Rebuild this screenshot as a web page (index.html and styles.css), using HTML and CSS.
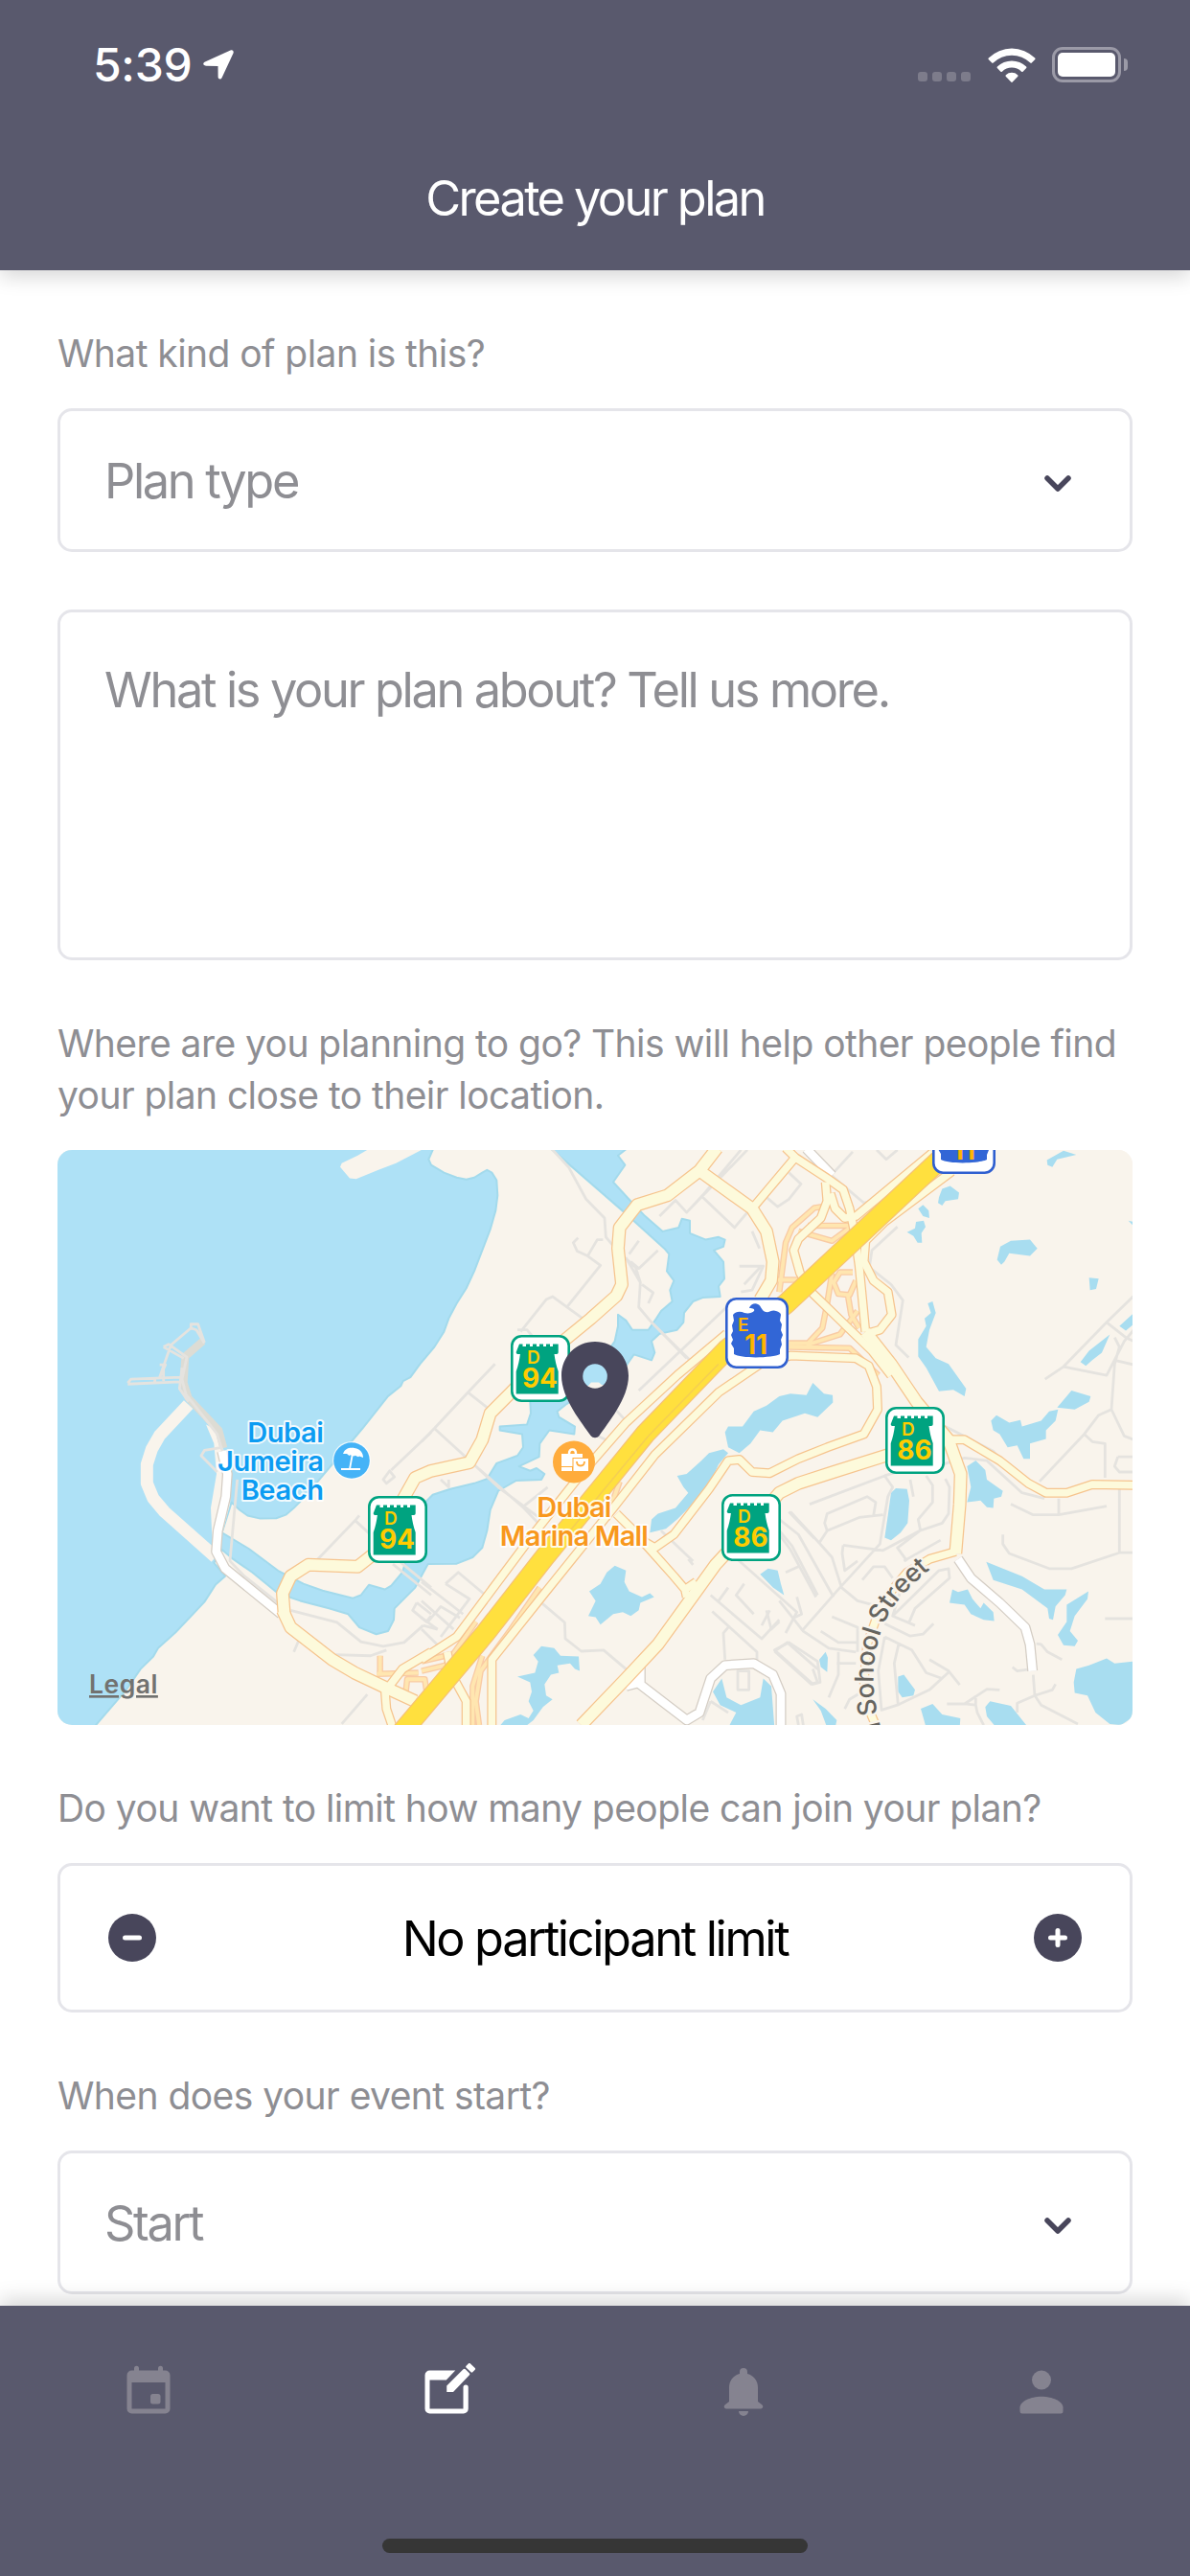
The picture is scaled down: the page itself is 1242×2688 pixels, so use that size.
FILE: index.html
```html
<!DOCTYPE html>
<html lang="en">
<head>
<meta charset="utf-8">
<title>Create your plan</title>
<link rel="stylesheet" href="styles.css">
</head>
<body>
<div class="screen">
  <header class="header">
    <div class="status">
      <div class="status-left">
        <span class="time">5:39</span>
        <svg class="location" viewBox="0 0 32 31"><path d="M2 12.500 28.500.6c2-.9 3.800.7 3 2.800L19.500 29.200c-.9 2-3.800 1.600-3.900-.7L15.500 17 3 16.700c-3.200-.2-3.700-3.100-1-4.200z"/></svg>
      </div>
      <div class="status-right">
        <div class="signal"><i></i><i></i><i></i><i></i></div>
        <svg class="wifi" viewBox="0 0 50 37"><path d="M.8 11.500a34.500 34.500 0 0 1 48.400 0c.5.5.5 1 .1 1.500l-3.500 3.600c-.5.5-1 .5-1.500 0a27.500 27.500 0 0 0-38.600 0c-.5.5-1 .5-1.500 0L.7 13c-.4-.5-.4-1 .1-1.500z"/><path d="M9.900 20.600a21.500 21.500 0 0 1 30.200 0c.5.5.5 1 .1 1.500l-3.600 3.600c-.5.500-1 .5-1.500 0a14.300 14.300 0 0 0-20.200 0c-.5.5-1 .5-1.500 0l-3.600-3.600c-.4-.5-.4-1 .1-1.500z"/><path d="M18.800 29.200a9 9 0 0 1 12.400 0c.5.500.5 1 .1 1.500l-5.500 5.800c-.5.500-1.100.5-1.600 0l-5.500-5.800c-.4-.5-.4-1 .1-1.500z"/></svg>
        <div class="battery"><div class="battery-case"><div class="battery-level"></div></div><div class="battery-nub"></div></div>
      </div>
    </div>
    <h1 class="title">Create your plan</h1>
  </header>

  <main class="form">
    <section class="group">
      <label class="label">What kind of plan is this?</label>
      <div class="field"><span class="placeholder">Plan type</span><svg class="chevron" viewBox="0 0 28 17"><path d="M3 3l11 11L25 3"/></svg></div>
    </section>
    <div class="field field-area"><span class="placeholder">What is your plan about? Tell us more.</span></div>
    <section class="group">
      <label class="label">Where are you planning to go? This will help other people find<br>your plan close to their location.</label>
      <div class="map">
        <svg class="terrain" viewBox="30 25.3 3366 1517.4" preserveAspectRatio="none">
          <defs>
            <g id="main-roads">
              <path d="M740 1250 735 1195 760 1150 815 1120 970 1125 1060 1065 1110 950 1150 890 1200 872 1320 850 1360 790 1385 720 1450 665 1570 560 1700 470 1780 410 1797 380 1785 285 1790 230 1845 170 1940 145 2040 80 2095 20"/>
              <path d="M735 1240 760 1285 890 1370 960 1405 1060 1445 1150 1480"/>
              <path d="M2040 80 2205 180 2250 240 2270 320 2265 370 2230 420"/>
              <path d="M2630 830 2460 875 2350 905 2290 930 2200 1020 2090 1120 2030 1190 1910 1330 1810 1420 1670 1543"/>
              <path d="M2560 505 2640 590 2720 690 2820 790 2858 880 2855 960 2842 1090"/>
            </g>
            <g id="side-roads">
              <path d="M1170 1370 1280 1310 1510 1050 1670 880 1810 745 1970 620 2125 510"/>
              <path d="M1390 1560V1370L1560 1190 1770 970 1900 830 2100 665 2230 590 2325 568 2530 575 2570 595 2595 650 2598 710 2555 775 2440 810 2350 840 2260 878 2205 875 2165 842 2130 845 2070 920 1960 1040 1900 1075 1870 1060 1780 985"/>
              <path d="M1870 1065 1960 1150 1995 1185 2030 1165M1995 1185 2000 1205"/>
              <path d="M1060 1450 1110 1395 1200 1350M1055 1445 1060 1500 1080 1550M1250 1350 1265 1410 1310 1480V1550"/>
              <path d="M2205 180 2340 45 2310 20M2340 45 2440 100 2490 130 2510 180 2525 240 2540 330 2560 505"/>
              <path d="M2435 110 2440 160 2420 205 2350 260 2335 290 2355 350 2390 400 2500 490 2580 555 2640 620"/>
              <path d="M2450 140 2465 180 2495 205 2530 200 2770 32"/>
              <path d="M2830 82 2620 215 2560 265 2555 320 2585 370 2630 400 2642 460 2605 500 2565 510"/>
              <path d="M2820 790 2870 790 2980 845 3070 905 3125 930 3190 930 3270 908 3410 910"/>
              <path d="M2842 1085 2760 1105 2690 1140 2630 1200 2590 1270 2565 1330 2555 1430 2570 1500 2595 1550"/>
            </g>
            <g id="ramps">
              <path d="M2290 400 2310 270 2330 230 2400 178 2425 175M2350 240 2455 265 2520 225M2380 225H2520M2285 368H2350"/>
              <path d="M2320 535H2380L2425 495 2440 430 2455 350M2320 545 2510 548 2600 620M2520 348H2480L2460 375 2475 405 2510 408 2530 370M2505 410 2515 460 2540 495M2375 540 2480 512 2535 450"/>
              <path d="M1160 1405 1030 1408M1040 1360V1405M1170 1400 1245 1385 1340 1270M1350 1543 1340 1480 1355 1400 1450 1290 1540 1180M1330 1543V1440L1360 1360M1170 1375 1245 1360M1120 1460 1125 1422H1180L1185 1450M1750 1000 1790 900"/>
            </g>
            <g id="local-roads">
              <path d="M545 820 562 880 557 940 532 1030 527 1085 555 1130 730 1250"/>
              <path d="M1855 1380V1430L1810 1440M1830 1420 2000 1530 2040 1510 2075 1420 2120 1385 2210 1380 2270 1410 2295 1460V1550"/>
              <path d="M2850 1105 2890 1155 2980 1220 3060 1285 3075 1330 3083 1400"/>
              <path d="M2375 22 2455 92"/>
            </g>
          </defs>
          <rect class="land" x="0" y="0" width="3400" height="1560"/>
          <g class="sea">
            <path d="M0 0H1205V25L1192 50 1200 65 1240 85 1280 98 1310 103 1335 98 1360 85 1375 78 1390 85 1405 105 1408 145 1402 185 1385 235 1360 290 1335 345 1310 390 1280 430 1255 470 1240 505 1210 545 1165 590 1135 625 1112 635 1105 648 1065 675 985 760 900 845 800 945 770 970 745 988 715 997 665 998 625 990 600 975 575 955 545 1035 630 1078 720 1135 800 1170 860 1188 955 1208 980 1200 1005 1173 1055 1185 1075 1175 1110 1140 1170 965 1205 935 1260 920 1335 905 1375 893 1405 852 1470 832 1488 810 1485 775 1415 765V755L1500 750 1512 720 1510 690 1550 660 1670 670 1625 695 1595 715 1600 730 1650 755 1648 775 1610 770 1570 765 1540 800 1538 835 1475 860 1510 872 1530 865 1555 880 1545 895 1465 898 1410 925 1385 975 1375 1030 1360 1075 1330 1100 1280 1117 1190 1118 1150 1180 1085 1235 1083 1265 1065 1295 1028 1303 975 1285 940 1250 880 1235 790 1215 720 1195 640 1140 580 1105 545 1080 520 1115 555 1150 525 1172 490 1218 400 1298 345 1340 330 1362 290 1395 245 1450 150 1543V1560H0z"/>
            <path d="M1580 25 1805 190 1930 285 1945 300 1938 345 1960 370 1948 395 1955 425 1920 450 1905 470 1880 500 1830 500 1810 475 1785 460V490L1775 530 1750 560 1660 600 1640 650 1755 655 1810 595 1835 565 1890 580 1900 560 1890 530 1915 510 1970 500 1990 480 1992 455 2020 425 2050 415 2105 412 2100 385 2118 365 2115 320 2085 290 2115 280 2120 262 2100 255 2060 262 2010 245V212L1985 207 1975 230 1925 240 1870 200 1830 165 1770 110 1807 65 1785 40 1815 20H1570z"/>
          </g>
          <path class="land" d="M915 70 945 100 965 102 1035 78 1090 60 1170 25 1150 10 1000 25 970 40 920 60z"/>
          <path class="land" d="M495 750 520 760 552 820 575 880 570 960 545 1040 518 1065 513 1030 510 970 528 880 520 800z"/>
          <path class="spit" d="M440 697 350 778 325 815 310 855V905L330 945 365 980 525 1100"/>
          <g class="lakes">
            <path d="M1695 1190 1730 1170 1750 1140 1775 1122 1810 1135 1805 1165 1820 1190 1860 1205 1885 1195 1898 1205 1855 1220 1850 1240 1825 1255 1800 1245 1770 1250 1730 1278 1715 1258 1692 1255 1715 1215z"/>
            <path d="M1470 1415 1525 1405 1535 1375 1520 1358 1545 1335 1585 1340 1605 1360 1662 1362 1665 1400 1650 1395 1635 1380 1595 1385 1600 1405 1575 1410 1555 1435 1560 1465 1580 1475 1550 1495 1520 1530 1490 1550H1410L1430 1530 1480 1515 1505 1525 1520 1505 1505 1480 1515 1455 1510 1430z"/>
            <path d="M1890 1000 1910 985 1965 970 2005 930 1990 915 1970 885 2000 880 2040 850 2070 825 2115 815 2130 825 2100 855 2070 910 2030 950 1970 1000 1935 1025 1885 1035z"/>
            <path d="M2120 770 2130 755 2175 755 2210 715 2250 700 2290 675 2325 668 2375 672 2395 640 2430 668 2457 672 2458 692 2410 730 2370 720 2300 740 2270 770 2230 765 2200 800 2165 825 2130 810z"/>
            <path d="M2230 1145 2255 1130 2285 1135 2295 1170 2305 1200 2270 1180zM2082 1455 2110 1420 2125 1470 2170 1490 2230 1470 2240 1420 2265 1440 2275 1550H2130L2155 1510 2105 1490z"/>
          </g>
          <g class="lakes" transform="translate(2250)">
            <path d="M878 52 930 27 970 38 910 50 895 70 880 65zM540 150 550 128 575 120 603 138 600 155 560 160 550 172 537 165zM475 180 490 170 508 185 510 205 490 200zM440 242 465 232 468 215 492 212 498 228 485 245 487 270H473L460 252z"/>
            <path d="M722 315 732 280 765 265 825 262 848 285 825 305 760 298 745 320 735 328zM1010 362 1040 365 1032 392 1013 395zM1133 212 1150 215V227zM505 430 520 425 530 455 510 500 500 545 530 575 570 590 625 655 620 675 585 658 540 662 500 600 475 570V525L500 490 495 470 515 455z"/>
            <path d="M1105 490 1150 455V485L1125 502zM983 585 1010 555 1075 512 1050 560 1020 580 1000 595zM703 740 720 725 760 745 795 738 800 755 860 740 885 715 913 710 905 740 875 765V788L825 800V840H805L785 805 755 810 730 775 710 765zM910 705 955 660 1015 675 1010 690 965 710z"/>
            <path d="M390 930 405 918 440 920 447 950 442 1010 420 1035 390 1055 370 1048 380 990zM628 860 655 845 685 870 690 895 740 925 735 940 712 945 710 970 690 968 670 950 628 955 640 915zM688 1112 800 1150 870 1185H940L935 1200 905 1230 897 1265 885 1262 880 1235 800 1185 710 1160z"/>
            <path d="M1008 1190 1005 1210 965 1255 950 1295 975 1320 965 1335 930 1332 912 1305 940 1270V1225zM573 1220 582 1185 600 1192 630 1185 645 1210 670 1235 680 1220 710 1245 713 1268 680 1265 640 1250 620 1225 590 1222zM165 1370 185 1350 192 1365 190 1403 170 1390zM412 1415 430 1410 465 1450 460 1465 425 1470 412 1455z"/>
            <path d="M145 1475 185 1500 220 1530 215 1550H190L170 1505zM483 1500 520 1487 550 1515 607 1525 605 1550H500zM685 1495 700 1480 765 1492 820 1550H720L690 1520zM962 1430 970 1395 1010 1385 1065 1367 1090 1380 1150 1375V1520L1110 1543 1075 1540 1030 1510 1005 1465 965 1458z"/>
          </g>
          <path class="pier" d="M485 530 430 570 425 640 440 680 535 765 550 812"/>
          <g class="streets">
            <path d="M490 533 470 485H448V495L385 540 350 625M490 535 465 500 448 495M362 545 378 538 435 572 420 630 432 670 530 775 550 830M362 545 425 575M250 640 260 630 415 625M250 643 415 637M335 628V643M350 592H368L350 625M362 605V635M420 600 412 655 440 690M545 810 490 818 480 832 530 875M593 895 570 1110 615 1150 720 1220M760 1240 905 1272 980 1323 1050 1335 1115 1325 1175 1280M900 1357 1010 1360 1060 1345M785 1320 770 1350M845 1105 962 1003 1100 1110 1200 1180M962 1003 975 990M1050 895 1070 872 1085 888 1060 905zM1075 870 1200 770M1080 1118 1200 1200M1155 1220 1200 1250M1155 1220 1142 1240 1185 1270 1200 1255M1175 1280 1220 1290M920 1540 1000 1462"/>
          </g>
          <g class="streets" transform="translate(1170)">
            <path d="M405 20 460 70 515 155 573 205 577 255 612 290 670 335 685 375 680 440 720 480 830 575M720 480 840 580M490 257 475 270 487 292 520 305 560 330 455 440 410 412 390 420 310 505M455 440 505 470M520 305 550 262H568M300 500H330L370 540M40 760 145 665 230 590M145 665 220 715M40 760 0 795M40 760 170 860 320 970 365 1010M170 860 240 915 375 1000M320 965 395 915M60 895 85 915V895M640 310 685 375M650 300 680 265M655 320 680 338 740 290M690 380 725 402 710 430M590 695 640 740M680 660 955 440M525 770 590 795M745 200 795 158 830 190 880 145 1000 25M830 190 1020 25M880 150 980 230 1080 130M1035 240 1058 285M995 332H1070L1035 395 1000 400M1010 380 1060 335M750 1030 850 1110M835 1105 850 1120"/>
            <path d="M0 1165 130 1250M0 1215 100 1290M0 1260 50 1290M75 1170 115 1140 200 1200M75 1170 150 1210 60 1310M20 1270 60 1230 120 1260M0 1290 60 1340M375 1220 448 1272 450 1315 500 1348 570 1345 640 1395M975 1095 1175 1245 1140 1300M905 1200 1065 1315 1120 1265M910 1243 1050 1350V1390M960 1285 945 1300 950 1370M960 1180 930 1215M1010 1170 985 1200 1040 1250M1065 1280 1090 1240M990 1400H1025V1450H990zM1105 1348 1145 1325 1240 1395M1105 1348 1220 1435 1240 1430 1225 1395M905 1480 880 1530M905 1480 960 1510M1150 980 1230 1050M1120 1030 1160 1070 1240 1200"/>
          </g>
          <g class="streets" transform="translate(2250)">
            <path d="M0 150 35 175 70 155 108 115 70 85M210 85 270 30M200 90 305 165 325 160M410 228 330 290 322 335 390 380 427 422 405 540 445 573M345 25 375 50 410 25M872 630 930 597 1065 480 1150 410M930 597 1065 620 1120 530 1150 500M1065 480 1125 520 1150 530M1090 520 1105 545 1090 590 1080 710 1120 780 1150 790M1090 580 1150 592M855 900 995 775 1040 725 1080 710M995 775 1020 795 1060 800V890M1100 835H1150M1100 835 1090 860 1105 875H1150M1105 910V1088L955 1130H885L760 1090 740 1065V1040M1105 1088H1150M765 960 835 988H915L1065 965M915 945V985M1060 1262H1150"/>
            <path d="M560 755 710 820 760 870M550 855 620 838 690 845 800 930 870 945M135 960 370 885 500 850M370 885 395 915 380 940 355 1065 230 1180 110 1295M450 895 460 940M500 885 520 910V955L475 1000 482 1030M560 893 573 915 570 985 550 1010 480 1030 365 1082 240 1068M480 1030 410 1075 440 1110M240 1068 237 1090 245 1135 285 1110M165 1062 190 1030 290 995 365 988M190 1030 182 1010 190 985 315 940 342 955 335 990M75 980 165 1062 205 1100 235 1180 285 1215 330 1225M40 1000 100 1040 210 1205M40 1040 75 1080 155 1205M60 1140 100 1125M95 1205 110 1250 85 1260M300 1160 335 1125H370L395 1155M430 1110 545 1055M430 1160 395 1255 465 1280M395 1255 540 1135 570 1130 573 1155 465 1235 445 1275M370 1275 450 1308 490 1303 523 1275M205 1257 285 1285V1350M170 1295 225 1325 285 1325M220 1380H280M225 1350V1410L195 1470M370 1310 350 1400 360 1503 410 1490 510 1450 575 1400M415 1325 400 1380 412 1490M370 1310 455 1345 500 1405 550 1420M510 1370 570 1400 605 1437M565 1487 620 1487 690 1448 730 1450M620 1487 655 1490 660 1510 680 1543M655 1465V1490M835 1410 840 1465 860 1490 975 1540M840 1465 785 1485V1510M840 1465 895 1450 905 1435M770 1390 785 1400 830 1395M845 1328 860 1330 880 1350 925 1370M25 1345 70 1325 160 1375 168 1430 145 1435zM0 1240 15 1290 40 1270M40 1215 115 1295 195 1340 280 1350M245 1500 260 1475 290 1460M100 1543 95 1520 110 1515 115 1543"/>
          </g>
          <use href="#ramps" class="ramp-edge"/><use href="#ramps" class="ramp-fill"/>
          <use href="#local-roads" class="local-edge"/><use href="#local-roads" class="local-fill"/>
          <use href="#side-roads" class="side-edge"/><use href="#main-roads" class="main-edge"/>
          <use href="#side-roads" class="side-fill"/><use href="#main-roads" class="main-fill"/>
          <g><path class="highway-edge" d="M1090 1580 1170 1500 1280 1390 1370 1300 1555 1100 1730 920 1870 775 2125 552 2310 432 2800 45 2880-20"/><path class="highway-fill" d="M1090 1580 1170 1500 1280 1390 1370 1300 1555 1100 1730 920 1870 775 2125 552 2310 432 2800 45 2880-20"/><path class="highway-line" d="M1620 1045 1880 780 2100 590"/></g>
        </svg>
        <svg class="markers" viewBox="60 1200 1122 600">
          <defs>
            <path id="street-path" d="M924 1819C910 1775 909 1745 915 1719 923 1681 940 1661 990 1622"/>
            <g id="d-shield"><rect x="1.300" y="1.300" width="59.400" height="67.400" rx="10" fill="#fff" stroke="#00a380" stroke-width="2.600"/><path fill="#00a380" d="M9 9.500h3.500V12H16V9.500h4V12h3V9.500h4V12h3V9.500h4V12h3V9.500h4V12h3V9.500h5.700v8.500c0 1-.7 2-1.700 2h-2.500c.8 6 2 12 4.200 18v23.500h-44V38c2.200-6 3.400-12 4.200-18h-2.500c-1 0-1.700-1-1.700-2z"/></g>
            <g id="e-shield"><rect x="1.300" y="1.300" width="63.400" height="71.400" rx="10" fill="#fff" stroke="#2f5fd0" stroke-width="2.600"/><path fill="#3266d6" d="M8 18c3-4 8-4 12-2 4 1 8 0 10-2 1-2-1-3-5-3 1-4 6-6 9-4 4 2 3 6 8 8 4 1 7-3 11-1 3 1 5 2 5 4l-1 6 2 4-1 6 2 5-2 5 1 5-2 5v5c-7 4-40 5-48 0v-6l-3-5 2-4-2-5 2-4-1-6 2-5z"/></g>
          </defs>
          <g class="road-number">
            <g transform="translate(533 1393)"><use href="#d-shield"/><text class="prefix" x="17" y="29.500">D</text><text x="30.500" y="55" text-anchor="middle">94</text></g>
            <g transform="translate(384 1561)"><use href="#d-shield"/><text class="prefix" x="17" y="29.500">D</text><text x="30.500" y="55" text-anchor="middle">94</text></g>
            <g transform="translate(753 1559)"><use href="#d-shield"/><text class="prefix" x="17" y="29.500">D</text><text x="30.500" y="55" text-anchor="middle">86</text></g>
            <g transform="translate(924 1468)"><use href="#d-shield"/><text class="prefix" x="17" y="29.500">D</text><text x="30.500" y="55" text-anchor="middle">86</text></g>
            <g class="emirate" transform="translate(757 1354)"><use href="#e-shield"/><text class="prefix" x="13" y="34.500">E</text><text x="32" y="59" text-anchor="middle">11</text></g>
            <g class="emirate" transform="translate(973 1151)"><use href="#e-shield"/><text x="33" y="59" text-anchor="middle">11</text></g>
          </g>
          <text class="street-name"><textPath href="#street-path" startOffset="11">ll Sohool Street</textPath></text>
          <g class="poi poi-beach"><text x="337.500" y="1505">Dubai</text><text x="337.500" y="1535">Jumeira</text><text x="337.500" y="1564.500">Beach</text></g>
          <circle cx="367" cy="1524" r="20" fill="#fff" opacity=".7"/><circle cx="367" cy="1524" r="18.800" fill="#45b3f7"/>
          <path fill="#fff" d="M358 1517c2-6 7-7 12-6 6 1 9 5 9 10l-4-1.500-1 .8-3.500-1.600-1 .8-4-1.200-1 .6-2.500-1.900z"/><path d="M369 1511l-4 22m-9 0h20" fill="none" stroke="#fff" stroke-width="1.800"/>
          <g class="poi poi-mall"><text x="599" y="1583">Dubai</text><text x="599" y="1613">Marina Mall</text></g>
          <circle cx="599" cy="1525.500" r="22" fill="#ffac3c"/>
          <path d="M594 1517c0-6 7-6 7 0" fill="none" stroke="#fff" stroke-width="2.500"/><path fill="#fff" d="M586 1517h22v4h-10.500v9H586zM586 1531h11v4h-11zM598.500 1522H614v13h-15.500z"/><path d="M602 1525c0 6 8 6 8 0" fill="none" stroke="#ffac3c" stroke-width="1.800"/>
          <path class="land" d="M607 1446h7l3-3.500h8l3 2.500h7v8h-28z"/>
          <path class="pin" fill-rule="evenodd" d="M621 1400c-20 0-35 15.500-35 35.500 0 24 22 50 30.500 62.500 2.500 3 6.500 3 9 0 8.500-12.500 30.500-38.500 30.500-62.500 0-20-15-35.500-35-35.500zm0 23.200a12.800 12.800 0 1 1 0 25.600 12.800 12.800 0 0 1 0-25.600z"/>
          <text class="legal" x="93" y="1767">Legal</text>
        </svg>
      </div>
    </section>
    <section class="group">
      <label class="label">Do you want to limit how many people can join your plan?</label>
      <div class="field stepper">
        <svg class="round" viewBox="0 0 50 50"><circle cx="25" cy="25" r="25"/><path d="M17.500 25h15"/></svg>
        <span class="value">No participant limit</span>
        <svg class="round" viewBox="0 0 50 50"><circle cx="25" cy="25" r="25"/><path d="M17.500 25h15M25 17.500v15"/></svg>
      </div>
    </section>
    <section class="group">
      <label class="label">When does your event start?</label>
      <div class="field"><span class="placeholder">Start</span><svg class="chevron" viewBox="0 0 28 17"><path d="M3 3l11 11L25 3"/></svg></div>
    </section>
  </main>

  <nav class="tabs">
    <div class="tab-row">
      <div class="tab"><svg viewBox="0 0 24 24"><path fill-rule="evenodd" d="M5 3h1V2.100a1 1 0 0 1 2 0V3h8V2.100a1 1 0 0 1 2 0V3h1a2 2 0 0 1 2 2v14a2 2 0 0 1-2 2H5a2 2 0 0 1-2-2V5a2 2 0 0 1 2-2zm0 5v11h14V8z"/><rect x="12.800" y="12.800" width="4.200" height="4.200" rx="1"/></svg></div>
      <div class="tab active"><svg viewBox="0 0 24 24"><path d="M5 3h10.700l-3.800 4H5v12h14V10a1 1 0 0 1 2.100 0v9a2 2 0 0 1-2 2H5a2 2 0 0 1-2-2V5a2 2 0 0 1 2-2z"/><path d="M12.100 12V9.400l6.900-6.900c.3-.3.6-.3.900 0l1.600 1.600c.3.3.3.6 0 .9L14.800 12zM20.200 1.100l1-1c.2-.2.5-.2.700 0l2 1.900c.2.200.2.500 0 .7l-1 1c-.2.200-.5.200-.7 0l-2-1.900c-.2-.2-.2-.5 0-.7z"/></svg></div>
      <div class="tab"><svg viewBox="0 0 24 24"><path d="M12 2a1.600 1.600 0 0 0-1.600 1.600v.8C7.700 5.100 6 7.400 6 10v6l-1.700 1.300c-.8.700-.3 1.700.5 1.700h14.400c.8 0 1.300-1 .5-1.700L18 16v-6c0-2.600-1.700-4.900-4.400-5.600v-.8A1.600 1.600 0 0 0 12 2zM10 20h4a2 2 0 0 1-4 0z"/></svg></div>
      <div class="tab"><svg viewBox="0 0 24 24"><circle cx="12" cy="7" r="4"/><path d="M12 13.900c-4.500 0-9 2-9 4.600V20a1 1 0 0 0 1 1h16a1 1 0 0 0 1-1v-1.500c0-2.600-4.500-4.600-9-4.600z"/></svg></div>
    </div>
    <div class="home-indicator"></div>
  </nav>
</div>
</body>
</html>
```
FILE: styles.css
```css
* { box-sizing: border-box; }
body { margin: 0; background: #fff; font-family: Inter, "Liberation Sans", sans-serif; }
.screen { width: 1242px; height: 2688px; display: flex; flex-direction: column; overflow: hidden; }

.header { flex: none; height: 282px; background: #59596d; color: #fff; box-shadow: 0 6px 20px rgba(0, 0, 0, .17); z-index: 1; position: relative; }
.status { height: 132px; padding: 0 65px 0 97px; display: flex; justify-content: space-between; }
.status-left { display: flex; align-items: flex-start; padding-top: 38px; gap: 12px; }
.time { font-size: 48px; line-height: 60px; font-weight: 500; letter-spacing: -.3px; }
.location { width: 32px; height: 31px; margin-top: 14px; fill: #fff; }
.status-right { display: flex; align-items: flex-start; padding-top: 49px; }
.signal { display: flex; gap: 5px; padding-top: 26px; }
.signal i { width: 10px; height: 10px; border-radius: 3px; background: #7d7c8b; }
.wifi { width: 50px; height: 37px; margin-left: 18px; fill: #fff; }
.battery { display: flex; align-items: center; gap: 3px; margin-left: 17px; }
.battery-case { width: 72px; height: 37px; border: 3px solid #9b9aa7; border-radius: 11px; padding: 3px; }
.battery-level { height: 100%; background: #fff; border-radius: 5px; }
.battery-nub { width: 4px; height: 13px; background: #9b9aa7; border-radius: 0 4px 4px 0; }
.title { margin: 0; height: 150px; line-height: 150px; text-align: center; font-size: 50.500px; font-weight: 400; letter-spacing: -2.600px; }

.form { flex: 1; min-height: 0; padding: 60px 60px 0; display: flex; flex-direction: column; gap: 60px; overflow: hidden; }
.group { flex: none; display: flex; flex-direction: column; gap: 30px; }
.label { font-size: 39px; line-height: 54px; color: #8e8e93; white-space: nowrap; letter-spacing: -.560px; }
.field { flex: none; height: 150px; border: 3px solid #e5e5ea; border-radius: 15px; padding: 0 61px 0 46px; display: flex; align-items: center; justify-content: space-between; background: #fff; }
.field-area { height: 366px; align-items: flex-start; padding-top: 50px; }
.placeholder, .value { font-size: 50.500px; line-height: 61px; letter-spacing: -2.350px; white-space: nowrap; color: #8e8e93; }
.value { color: #000; }
.chevron { width: 28px; height: 17px; margin-top: 6px; fill: none; stroke: #48465b; stroke-width: 5.500; stroke-linecap: round; stroke-linejoin: round; }
.stepper { height: 156px; padding: 0 50px; }
.round { width: 50px; height: 50px; fill: #48465b; stroke-width: 5; stroke-linecap: round; }
.round path { stroke: #fff; }

.map { position: relative; height: 600px; border-radius: 15px; overflow: hidden; background: #f9f4ec; }
.terrain, .markers { position: absolute; inset: 0; width: 100%; height: 100%; }
.terrain path { vector-effect: non-scaling-stroke; stroke-linejoin: round; }
.land { fill: #f9f4ec; }
.sea { fill: #aee1f6; stroke: #a3daec; stroke-width: 2px; }
.lakes { fill: #a8ddf0; }
.spit { fill: none; stroke: #f9f4ec; stroke-width: 13px; }
.pier { fill: none; stroke: #dddcd4; stroke-width: 8px; }
.streets { fill: none; stroke: #e5e3df; stroke-width: 2.800px; }
.terrain use { fill: none; stroke-linecap: butt; }
.ramp-edge { stroke: #f9cba4; stroke-width: 6.500px; }
.ramp-fill { stroke: #ffe6b0; stroke-width: 3.800px; }
.local-edge { stroke: #d4cdc4; stroke-width: 11px; }
.local-fill { stroke: #fff; stroke-width: 8.500px; }
.side-edge { stroke: #f6c48e; stroke-width: 10px; }
.side-fill { stroke: #fdfadb; stroke-width: 7.500px; }
.main-edge { stroke: #f6c48e; stroke-width: 14px; }
.main-fill { stroke: #fdfadb; stroke-width: 11.500px; }
.highway-edge, .highway-fill, .highway-line { fill: none; }
.highway-edge { stroke: #f6c274; stroke-width: 22px; }
.highway-fill { stroke: #ffe03e; stroke-width: 19.500px; }
.highway-line { stroke: #f5cf52; stroke-width: 1.500px; }
.road-number { font-size: 28px; font-weight: 700; fill: #fc0; }
.road-number .prefix { font-size: 19px; font-weight: 600; }
.emirate { fill: #ffb400; }
.street-name { font-size: 27px; font-weight: 500; fill: #66645f; stroke: #f9f4ec; stroke-width: 5px; paint-order: stroke; letter-spacing: -.2px; }
.poi { font-size: 29px; font-weight: 600; stroke: rgba(255, 255, 255, .85); stroke-width: 4px; paint-order: stroke; stroke-linejoin: round; letter-spacing: -.4px; }
.poi-beach { fill: #0c9cf2; text-anchor: end; }
.poi-mall { fill: #f8981d; text-anchor: middle; letter-spacing: -.8px; }
.pin { fill: #48465b; }
.legal { font-size: 26.500px; font-weight: 600; fill: #727270; text-decoration: underline; letter-spacing: .5px; }

.tabs { flex: none; position: relative; height: 282px; background: #59596d; box-shadow: 0 -6px 20px rgba(0, 0, 0, .17); display: flex; flex-direction: column; justify-content: space-between; align-items: center; padding: 60px 0 24px; }
.tab-row { width: 100%; display: grid; grid-template-columns: repeat(4, 1fr); justify-items: center; }
.tab svg { display: block; width: 60px; height: 60px; fill: #858390; overflow: visible; }
.tab.active svg { fill: #fff; }
.home-indicator { width: 444px; height: 15px; border-radius: 8px; background: #363636; }
```
